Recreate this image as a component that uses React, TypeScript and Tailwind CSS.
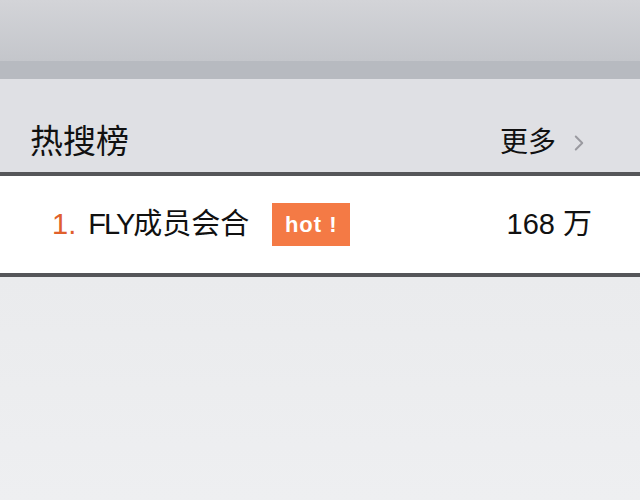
import { ChevronRight } from 'lucide-react';

const font = "font-['Liberation_Sans','Noto_Sans_CJK_SC',sans-serif]";

export default function App() {
  return (
    <div className={`flex h-[500px] w-[640px] flex-col overflow-hidden bg-[#ebecee] ${font}`}>
      {/* status / nav strip */}
      <div className="h-[61px] bg-gradient-to-b from-[#d3d4d8] to-[#c4c6cb]" />
      <div className="h-[18px] bg-[#b7bac0]" />

      {/* section header */}
      <div className="flex h-[93px] items-end justify-between bg-[#dfe0e4] pb-[14px] pl-[30px] pr-[48px]">
        <h2 className="text-[33px] leading-none text-[#111]">热搜榜</h2>
        <div className="flex items-center gap-[10px] pb-[1px]">
          <span className="text-[28px] leading-none text-[#111]">更多</span>
          <ChevronRight className="h-[26px] w-[26px] text-[#9a9aa0]" strokeWidth={1.8} />
        </div>
      </div>

      {/* list row */}
      <div className="border-y-[4px] border-[#555659] bg-white">
        <div className="flex h-[97px] items-center pl-[52px] pr-[48px]">
          <span className="text-[29px] text-[#e0602c]">1.</span>
          <span className="ml-[12px] text-[29px] text-[#111]">
            <span className="tracking-[-2px]">FLY</span>成员会合
          </span>
          <span className="ml-[23px] flex h-[43px] w-[78px] items-center justify-center bg-[#f47a45] text-[22px] font-semibold tracking-[1px] text-white">hot !</span>
          <span className="ml-auto text-[29px] text-[#111]">168 万</span>
        </div>
      </div>

      <div className="flex-1 bg-gradient-to-b from-[#eaebed] to-[#eeeff1]" />
    </div>
  );
}
